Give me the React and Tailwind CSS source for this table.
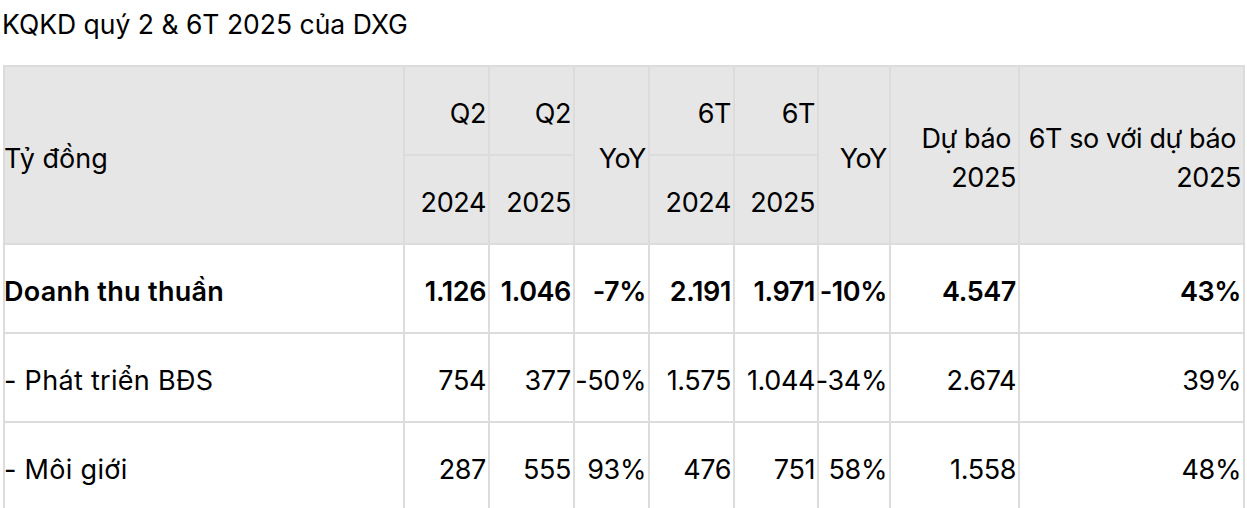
import React from "react";

const font = { fontFamily: "Inter, 'Noto Sans', sans-serif" };

const rows = [
  { label: "Doanh thu thuần", bold: true, v: ["1.126", "1.046", "-7%", "2.191", "1.971", "-10%", "4.547", "43%"] },
  { label: "- Phát triển BĐS", bold: false, v: ["754", "377", "-50%", "1.575", "1.044", "-34%", "2.674", "39%"] },
  { label: "- Môi giới", bold: false, v: ["287", "555", "93%", "476", "751", "58%", "1.558", "48%"] },
];

const hcell = "bg-[#e6e6e6] border-l-2 border-t-2 border-[#dcdcdc] flex items-center pt-[6px]";
const bcell = "bg-white border-l-2 border-t-2 border-[#dcdcdc] flex items-center pt-[6px]";

export default function App() {
  return (
    <div className="bg-white w-[1247px] h-[508px] overflow-hidden text-black" style={font}>
      <div className="pl-[2px] pt-[5px] h-[65px] text-[26.5px] leading-[39px]">KQKD quý 2 &amp; 6T 2025 của DXG</div>
      <div className="ml-[3px] w-[1242px] border-r-2 border-[#dcdcdc] grid grid-cols-[400px_85px_85px_75px_85px_84px_72px_129px_225px] grid-rows-[89px_89px_89px_89px_89px] text-[27px] leading-[39px] tracking-[-0.4px]">
        <div className={`${hcell} row-span-2`}><span className="-ml-[1px] tracking-normal">Tỷ đồng</span></div>
        <div className={`${hcell} justify-end pr-[2px]`}>Q2</div>
        <div className={`${hcell} justify-end pr-[2px]`}>Q2</div>
        <div className={`${hcell} row-span-2 justify-end pr-[2px]`}>YoY</div>
        <div className={`${hcell} justify-end pr-[2px]`}>6T</div>
        <div className={`${hcell} justify-end pr-[2px]`}>6T</div>
        <div className={`${hcell} row-span-2 justify-end pr-[2px]`}>YoY</div>
        <div className={`${hcell} row-span-2 justify-end pr-[2px]`}>
          <div className="flex flex-col items-end">
            <span className="pr-[5px] whitespace-nowrap">Dự báo</span>
            <span>2025</span>
          </div>
        </div>
        <div className={`${hcell} row-span-2 justify-end pr-[2px]`}>
          <div className="flex flex-col items-end">
            <span className="pr-[5px] whitespace-nowrap">6T so với dự báo</span>
            <span>2025</span>
          </div>
        </div>
        <div className={`${hcell} justify-end pr-[2px]`}>2024</div>
        <div className={`${hcell} justify-end pr-[2px]`}>2025</div>
        <div className={`${hcell} justify-end pr-[2px]`}>2024</div>
        <div className={`${hcell} justify-end pr-[2px]`}>2025</div>
        {rows.map((r) => (
          <React.Fragment key={r.label}>
            <div className={`${bcell} ${r.bold ? "font-semibold" : ""}`}><span className="-ml-[1px] whitespace-nowrap tracking-[0.3px]">{r.label}</span></div>
            {r.v.map((x, i) => (
              <div key={i} className={`${bcell} justify-end pr-[2px] whitespace-nowrap ${r.bold ? "font-semibold" : ""}`}>{x}</div>
            ))}
          </React.Fragment>
        ))}
      </div>
    </div>
  );
}
